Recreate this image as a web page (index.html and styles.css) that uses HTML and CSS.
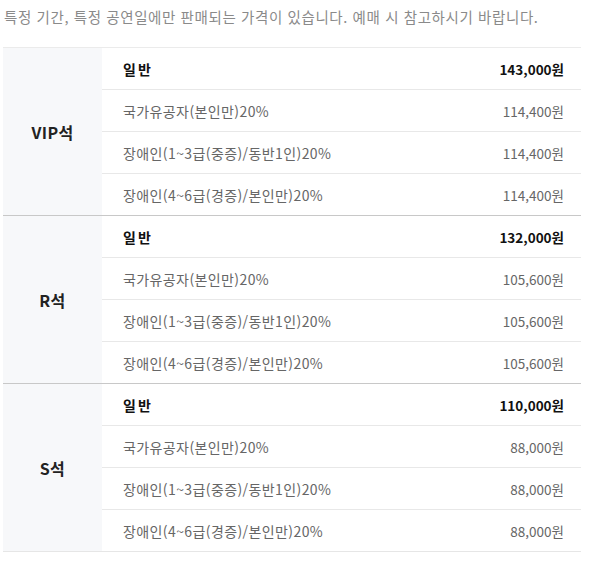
FILE: index.html
```html
<!DOCTYPE html>
<html lang="ko">
<head>
<meta charset="utf-8">
<link rel="stylesheet" href="styles.css">
</head>
<body>
<p class="notice">특정 기간, 특정 공연일에만 판매되는 가격이 있습니다. 예매 시 참고하시기 바랍니다.</p>
<table class="price-table">
  <tbody class="group">
    <tr><th rowspan="4" class="grade">VIP석</th><td class="name strong">일반</td><td class="price strong">143,000원</td></tr>
    <tr><td class="name">국가유공자(본인만)20%</td><td class="price">114,400원</td></tr>
    <tr><td class="name">장애인(1~3급(중증)/동반1인)20%</td><td class="price">114,400원</td></tr>
    <tr><td class="name">장애인(4~6급(경증)/본인만)20%</td><td class="price">114,400원</td></tr>
  </tbody>
  <tbody class="group">
    <tr><th rowspan="4" class="grade">R석</th><td class="name strong">일반</td><td class="price strong">132,000원</td></tr>
    <tr><td class="name">국가유공자(본인만)20%</td><td class="price">105,600원</td></tr>
    <tr><td class="name">장애인(1~3급(중증)/동반1인)20%</td><td class="price">105,600원</td></tr>
    <tr><td class="name">장애인(4~6급(경증)/본인만)20%</td><td class="price">105,600원</td></tr>
  </tbody>
  <tbody class="group">
    <tr><th rowspan="4" class="grade">S석</th><td class="name strong">일반</td><td class="price strong">110,000원</td></tr>
    <tr><td class="name">국가유공자(본인만)20%</td><td class="price">88,000원</td></tr>
    <tr><td class="name">장애인(1~3급(중증)/동반1인)20%</td><td class="price">88,000원</td></tr>
    <tr><td class="name">장애인(4~6급(경증)/본인만)20%</td><td class="price">88,000원</td></tr>
  </tbody>
</table>
</body>
</html>
```
FILE: styles.css
```css
html, body {
  margin: 0;
  padding: 0;
  background: #fff;
}
body {
  font-family: "Noto Sans CJK KR", "Noto Sans", sans-serif;
  padding: 0 14px 0 3px;
}
.notice {
  margin: 0;
  padding: 6px 0 0 1px;
  height: 47px;
  box-sizing: border-box;
  font-size: 14.5px;
  line-height: 22px;
  color: #8a8a8a;
  letter-spacing: 0.6px;
  white-space: nowrap;
}
.price-table {
  width: 578px;
  border-collapse: collapse;
  border-top: 1px solid #ebebeb;
}
.group {
  border-bottom: 1px solid #c8c8c8;
}
.group:last-child {
  border-bottom: 1px solid #e6e6e6;
}
.grade {
  width: 99px;
  padding: 0;
  background: #f7f8fa;
  font-size: 16px;
  font-weight: 700;
  color: #222;
  text-align: center;
  vertical-align: middle;
  letter-spacing: 0.4px;
}
.price-table td {
  height: 41px;
  padding: 0;
  font-size: 14px;
  color: #666;
  border-bottom: 1px solid #e8e8e8;
  vertical-align: middle;
}
.group tr:last-child td {
  border-bottom: none;
}
.name {
  padding-left: 21px !important;
  letter-spacing: 0.4px;
}
.price {
  text-align: right;
  padding-right: 17px !important;
  font-size: 13.5px !important;
}
.name.strong {
  letter-spacing: 2px;
}
.strong {
  color: #111 !important;
  font-weight: 700;
}
```
